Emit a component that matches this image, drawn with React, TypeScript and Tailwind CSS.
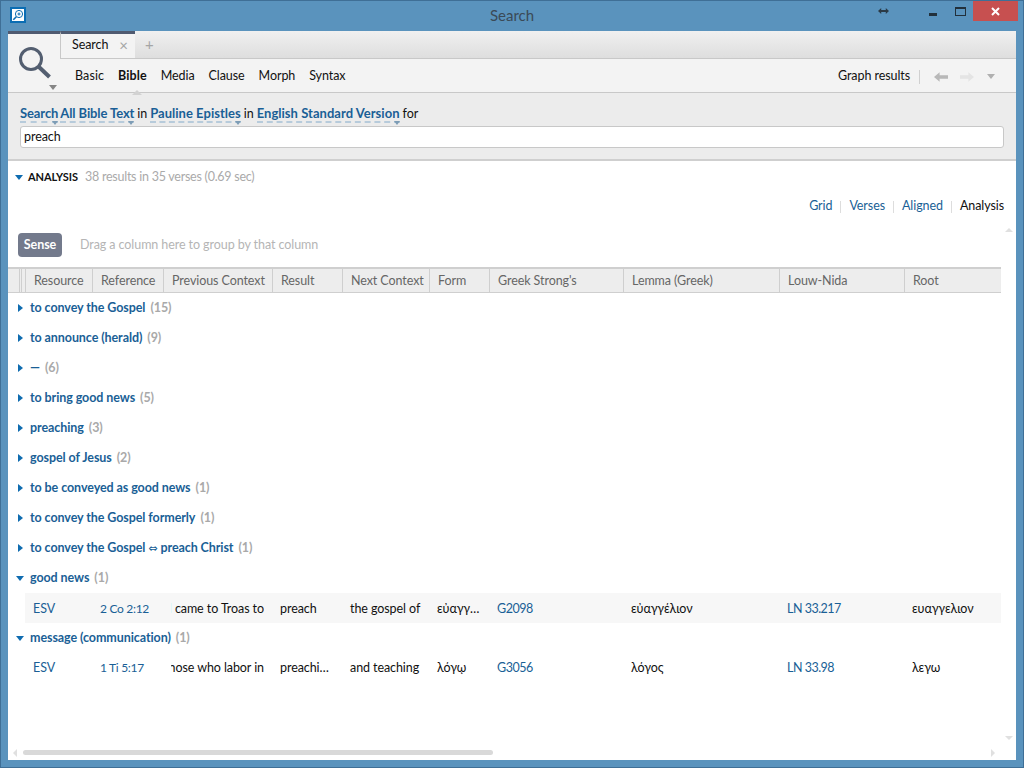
import React from 'react';

const columns = [
  { name: 'Resource', w: 'w-[67px]' },
  { name: 'Reference', w: 'w-[71px]' },
  { name: 'Previous Context', w: 'w-[109px]' },
  { name: 'Result', w: 'w-[70px]' },
  { name: 'Next Context', w: 'w-[87px]' },
  { name: 'Form', w: 'w-[60px]' },
  { name: "Greek Strong's", w: 'w-[134px]' },
  { name: 'Lemma (Greek)', w: 'w-[156px]' },
  { name: 'Louw-Nida', w: 'w-[125px]' },
  { name: 'Root', w: 'w-[96px]' },
];

const collapsed: { label: React.ReactNode; count: number }[] = [
  { label: 'to convey the Gospel', count: 15 },
  { label: 'to announce (herald)', count: 9 },
  { label: '—', count: 6 },
  { label: 'to bring good news', count: 5 },
  { label: 'preaching', count: 3 },
  { label: 'gospel of Jesus', count: 2 },
  { label: 'to be conveyed as good news', count: 1 },
  { label: 'to convey the Gospel formerly', count: 1 },
  {
    label: (
      <>
        to convey the Gospel <span className="font-['DejaVu_Sans',sans-serif] text-[11px] font-normal">⇔</span> preach Christ
      </>
    ),
    count: 1,
  },
];

function Group({ label, count, open }: { label: React.ReactNode; count: number; open?: boolean }) {
  return (
    <div className="flex h-[30px] items-center">
      <div className="flex w-[22px] shrink-0 justify-center pl-[2px]">
        {open ? (
          <div className="h-0 w-0 border-x-[4px] border-t-[5px] border-x-transparent border-t-[#0f6cb0]" />
        ) : (
          <div className="h-0 w-0 border-y-[4px] border-l-[5px] border-y-transparent border-l-[#0f6cb0]" />
        )}
      </div>
      <span className="font-bold text-[#1a5f96]">{label}</span>
      <span className="ml-[5px] font-bold text-[#a9a9a9]">({count})</span>
    </div>
  );
}

function DataRow({ cells, shaded }: { cells: string[]; shaded?: boolean }) {
  const link = 'text-[#1a5f96]';
  return (
    <div className={`ml-[17px] flex h-[30px] items-center ${shaded ? 'bg-[#f7f7f7] pt-[2px]' : ''}`}>
      <div className={`w-[67px] px-2 ${link}`}>{cells[0]}</div>
      <div className={`w-[71px] px-2 text-[12px] tracking-[-0.3px] ${link}`}>{cells[1]}</div>
      <div className="w-[109px] px-2">
        <div className="flex justify-end overflow-hidden whitespace-nowrap">{cells[2]}</div>
      </div>
      <div className="w-[70px] truncate pl-2 pr-[10px]">{cells[3]}</div>
      <div className="w-[87px] truncate pl-2 pr-[2px]">{cells[4]}</div>
      <div className="w-[60px] truncate px-2">{cells[5]}</div>
      <div className={`w-[134px] px-2 tracking-[-0.5px] ${link}`}>{cells[6]}</div>
      <div className="w-[156px] px-2">{cells[7]}</div>
      <div className={`w-[125px] px-2 tracking-[-0.5px] ${link}`}>{cells[8]}</div>
      <div className="w-[97px] px-2">{cells[9]}</div>
    </div>
  );
}

function QueryLink({ children, className }: { children: React.ReactNode; className?: string }) {
  return (
    <span className={`relative border-b-2 border-dashed border-[#b7cbdb] text-[13px] font-bold leading-[15px] text-[#1a5f96] ${className ?? 'tracking-[0.03px]'}`}>
      {children}
      <span className="absolute bottom-[-4px] right-0 h-0 w-0 border-x-[3px] border-t-[4px] border-x-transparent border-t-[#7d9cb5]" />
    </span>
  );
}

function QueryWord({ children }: { children: React.ReactNode }) {
  return <span className="border-b-2 border-transparent leading-[15px]">{children}</span>;
}

export default function App() {
  return (
    <div className="flex h-[768px] w-[1024px] flex-col overflow-hidden border border-[#3f6f96] bg-[#5a93bd] font-['Lato',sans-serif] text-[12.5px] tracking-[-0.08px] text-[#111]">
      {/* title bar */}
      <div className="relative flex h-[30px] shrink-0 items-center justify-center text-[15px] tracking-normal text-[#3a4a57]">
        <span className="-mt-[1px]">Search</span>
        <div className="absolute left-[9px] top-[6px] h-[16px] w-[16px] bg-[#0b6db3] p-[2px]">
          <svg viewBox="0 0 12 12" className="h-full w-full bg-white">
            <circle cx="7" cy="5" r="3.600" fill="none" stroke="#0b6db3" strokeWidth="1" />
            <path d="M5.500 5h3M7 3.500v3" stroke="#0b6db3" strokeWidth="1" />
            <path d="M4.300 7.700 1.300 10.700" stroke="#0b6db3" strokeWidth="1.600" />
          </svg>
        </div>
        <div className="absolute right-[5px] top-0 flex items-start">
          <svg width="11" height="8" viewBox="0 0 12 8" className="mr-[40px] mt-[6px]">
            <path d="M0 4 3.500.8v2.200h5V.8L12 4 8.500 7.200V5h-5v2.200Z" fill="#2b3a46" />
          </svg>
          <div className="mr-[18px] mt-[12px] h-[3px] w-[8px] bg-[#22303b]" />
          <div className="mr-[7px] mt-[6px] h-[9px] w-[11px] border border-t-[2px] border-[#22303b]" />
          <div className="flex h-[20px] w-[45px] items-center justify-center bg-[#c75050]">
            <svg width="9" height="9" viewBox="0 0 9 9">
              <path d="M1 1 8 8M8 1 1 8" stroke="#fff" strokeWidth="2" />
            </svg>
          </div>
        </div>
      </div>

      <div className="mx-[7px] mb-[7px] flex flex-1 flex-col bg-white">
        {/* tabs and search kinds */}
        <div className="flex h-[62px] shrink-0 border-b border-[#c8c8c8]">
          <div className="relative w-[52px] shrink-0 border-t-[3px] border-[#4f5a70] bg-[#f3f3f3]">
            <svg width="36" height="38" viewBox="0 0 36 38" className="ml-[8px] mt-[11px]">
              <circle cx="15" cy="14" r="10.500" fill="none" stroke="#535e70" strokeWidth="3" />
              <path d="M23 22 33.500 32" stroke="#535e70" strokeWidth="4" />
            </svg>
            <div className="absolute bottom-[2px] left-[41px] h-0 w-0 border-x-[4px] border-t-[5px] border-x-transparent border-t-[#858585]" />
          </div>
          <div className="flex flex-1 flex-col">
            <div className="flex h-[27px] shrink-0 bg-gradient-to-b from-[#f0f0f0] to-[#dedede]">
              <div className="flex w-[75px] items-center border-l border-t-[3px] border-l-[#c8c8c8] border-t-[#4f5a70] bg-[#f3f3f3] pb-[1px] pl-[11px]">
                <span>Search</span>
                <span className="ml-[11px] text-[15px] leading-none text-[#a5a5a5]">×</span>
              </div>
              <span className="ml-[10px] mt-[2px] text-[15px] text-[#a5a5a5]">+</span>
            </div>
            <div className="flex flex-1 items-center border-t border-[#c8c8c8] bg-[#f3f3f3] pl-[15px] pt-[2px]">
              <div className="relative flex gap-[14px]">
                <span className="tracking-[0.1px]">Basic</span>
                <span className="font-bold tracking-[0.1px]">Bible</span>
                <span>Media</span>
                <span>Clause</span>
                <span>Morph</span>
                <span>Syntax</span>
                <div className="absolute left-[57px] top-[23px] h-0 w-0 border-x-[5px] border-b-[5px] border-x-transparent border-b-[#d2d2d2]" />
              </div>
              <div className="ml-auto flex items-center">
                <span>Graph results</span>
                <div className="ml-[9px] mr-[14px] h-[14px] w-px bg-[#d0d0d0]" />
                <svg width="14" height="10" viewBox="0 0 15 10">
                  <path d="M0 5 6 0v3h9v4H6v3Z" fill="#b8b8b8" />
                </svg>
                <svg width="14" height="10" viewBox="0 0 15 10" className="ml-[12px]">
                  <path d="M15 5 9 0v3H0v4h9v3Z" fill="#e4e4e4" />
                </svg>
                <div className="ml-[13px] mr-[21px] h-0 w-0 border-x-[4px] border-t-[5px] border-x-transparent border-t-[#b0b0b0]" />
              </div>
            </div>
          </div>
        </div>

        {/* query */}
        <div className="flex h-[68px] shrink-0 flex-col border-b-2 border-[#cfcfcf] bg-[#ececec] px-[12px] pt-[12px]">
          <div className="flex h-[18px] items-center gap-[3px]">
            <QueryLink className="tracking-[-0.1px]">Search</QueryLink>
            <QueryLink className="-ml-[1px] tracking-[-0.1px]">All Bible Text</QueryLink>
            <QueryWord>in</QueryWord>
            <QueryLink>Pauline Epistles</QueryLink>
            <QueryWord>in</QueryWord>
            <QueryLink>English Standard Version</QueryLink>
            <QueryWord>for</QueryWord>
          </div>
          <div className="mt-[3px] flex h-[22px] items-center rounded-[3px] border border-[#c8c8c8] bg-white pl-[3px]">
            preach
          </div>
        </div>

        {/* analysis */}
        <div className="flex min-h-0 flex-1">
          <div className="flex min-w-0 flex-1 flex-col">
            <div className="flex h-[30px] shrink-0 items-center pl-[7px] pt-[2px]">
              <div className="h-0 w-0 border-x-[4px] border-t-[5px] border-x-transparent border-t-[#0f6cb0]" />
              <span className="ml-[5px] text-[11px] font-bold">ANALYSIS</span>
              <span className="ml-[7px] tracking-[-0.25px] text-[#aaa]">38 results in 35 verses (0.69 sec)</span>
            </div>
            <div className="-mr-[3px] flex h-[27px] shrink-0 items-center justify-end pt-[4px]">
              <span className="text-[#1a5f96]">Grid</span>
              <div className="mx-[8px] h-[12px] w-px bg-[#ddd]" />
              <span className="text-[#1a5f96]">Verses</span>
              <div className="mx-[8px] h-[12px] w-px bg-[#ddd]" />
              <span className="text-[#1a5f96]">Aligned</span>
              <div className="mx-[8px] h-[12px] w-px bg-[#ddd]" />
              <span>Analysis</span>
            </div>
            <div className="flex h-[49px] shrink-0 items-start pl-[10px] pt-[15px]">
              <div className="flex h-[24px] w-[44px] items-center justify-center rounded-[4px] bg-[#737a8c] font-bold text-white">
                Sense
              </div>
              <span className="ml-[18px] mt-[3px] text-[#b5b5b5]">Drag a column here to group by that column</span>
            </div>
            <div className="flex h-[26px] shrink-0 border-b border-t-[2px] border-b-[#cfcfcf] border-t-[#cfcfcf] bg-[#ededed] text-[#666]">
              <div className="flex w-[18px] justify-end border-r border-[#cfcfcf] pr-[3px]">
                <div className="h-full w-[3px] border-x border-[#cfcfcf]" />
              </div>
              {columns.map((c, i) => (
                <div
                  key={c.name}
                  className={`flex items-center pl-[8px] pt-[2px] ${c.w} ${i < columns.length - 1 ? 'border-r border-[#cfcfcf]' : ''}`}
                >
                  {c.name}
                </div>
              ))}
            </div>
            <div className="flex-1 overflow-hidden">
              {collapsed.map((g, i) => (
                <Group key={i} label={g.label} count={g.count} />
              ))}
              <Group label="good news" count={1} open />
              <DataRow
                shaded
                cells={['ESV', '2 Co 2:12', 'When I came to Troas to', 'preach', 'the gospel of', 'εὐαγγέλιον', 'G2098', 'εὐαγγέλιον', 'LN 33.217', 'ευαγγελιον']}
              />
              <Group label="message (communication)" count={1} open />
              <DataRow
                cells={['ESV', '1 Ti 5:17', 'those who labor in', 'preaching', 'and teaching', 'λόγῳ', 'G3056', 'λόγος', 'LN 33.98', 'λεγω']}
              />
            </div>
            {/* horizontal scroll */}
            <div className="flex h-[15px] shrink-0 items-center pl-[5px]">
              <div className="h-0 w-0 border-y-[4px] border-r-[4px] border-y-transparent border-r-[#e0e0e0]" />
              <div className="ml-[6px] h-[5px] w-[470px] rounded-full bg-[#d9d9d9]" />
              <div className="ml-auto mr-[6px] h-0 w-0 border-y-[4px] border-l-[4px] border-y-transparent border-l-[#e0e0e0]" />
            </div>
          </div>
          {/* vertical scroll */}
          <div className="flex w-[15px] shrink-0 flex-col items-center justify-between pb-[20px] pt-[67px]">
            <div className="h-0 w-0 border-x-[4px] border-b-[4px] border-x-transparent border-b-[#e0e0e0]" />
            <div className="h-0 w-0 border-x-[4px] border-t-[4px] border-x-transparent border-t-[#e0e0e0]" />
          </div>
        </div>
      </div>
    </div>
  );
}
